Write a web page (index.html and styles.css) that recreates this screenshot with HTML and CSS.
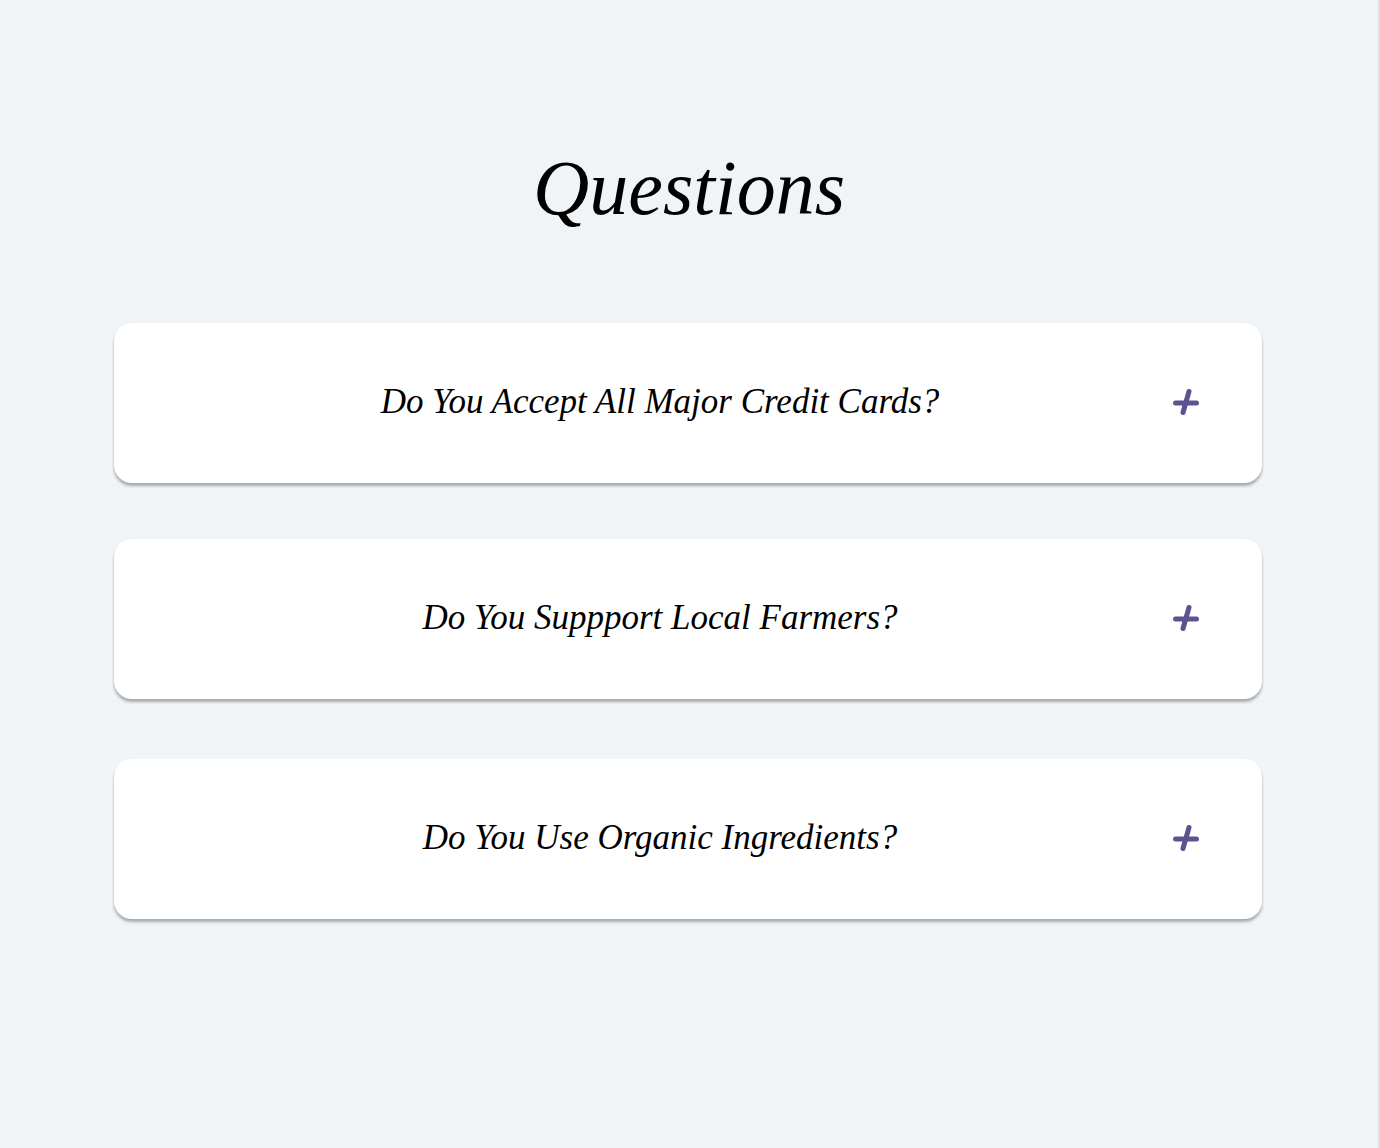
FILE: index.html
```html
<!DOCTYPE html>
<html lang="en">
<head>
<meta charset="utf-8">
<title>Questions</title>
<link rel="stylesheet" href="styles.css">
</head>
<body>
<div class="page">
  <h1 class="title">Questions</h1>
  <div class="faq">
    <div class="card">
      <div class="question">Do You Accept All Major Credit Cards?</div>
      <svg class="plus" width="26" height="26" viewBox="0 0 26 26"><path d="M2.5 14H23.5M16 2.5L10 23.5" stroke="#5e5390" stroke-width="5" stroke-linecap="round" fill="none"/></svg>
    </div>
    <div class="card card-mid">
      <div class="question">Do You Suppport Local Farmers?</div>
      <svg class="plus" width="26" height="26" viewBox="0 0 26 26"><path d="M2.5 14H23.5M16 2.5L10 23.5" stroke="#5e5390" stroke-width="5" stroke-linecap="round" fill="none"/></svg>
    </div>
    <div class="card">
      <div class="question">Do You Use Organic Ingredients?</div>
      <svg class="plus" width="26" height="26" viewBox="0 0 26 26"><path d="M2.5 14H23.5M16 2.5L10 23.5" stroke="#5e5390" stroke-width="5" stroke-linecap="round" fill="none"/></svg>
    </div>
  </div>
</div>
</body>
</html>
```
FILE: styles.css
```css
html, body {
  margin: 0;
  padding: 0;
  background: #f1f4f7;
}
.page {
  box-sizing: border-box;
  width: 1380px;
  min-height: 1148px;
  border-right: 2px solid #dedfe1;
  padding-top: 138px;
  font-family: "Liberation Serif", "DejaVu Serif", serif;
  font-style: italic;
  color: #000;
}
.title {
  margin: 0;
  text-align: center;
  font-weight: 400;
  font-size: 78px;
  line-height: 100px;
  letter-spacing: 0;
}
.faq {
  margin: 85px 0 0 114px;
  width: 1148px;
  display: flex;
  flex-direction: column;
  gap: 56px;
}
.card {
  height: 160px;
  background: #fff;
  border-radius: 18px;
  box-shadow: 0 3px 3px rgba(0, 0, 0, 0.3);
  display: flex;
  align-items: center;
  padding: 0 63px 2px 56px;
  box-sizing: border-box;
}
.card-mid {
  margin-bottom: 4px;
}
.question {
  flex: 1;
  text-align: center;
  font-size: 35px;
  margin-right: 23px;
}
.plus {
  flex: none;
}
```
